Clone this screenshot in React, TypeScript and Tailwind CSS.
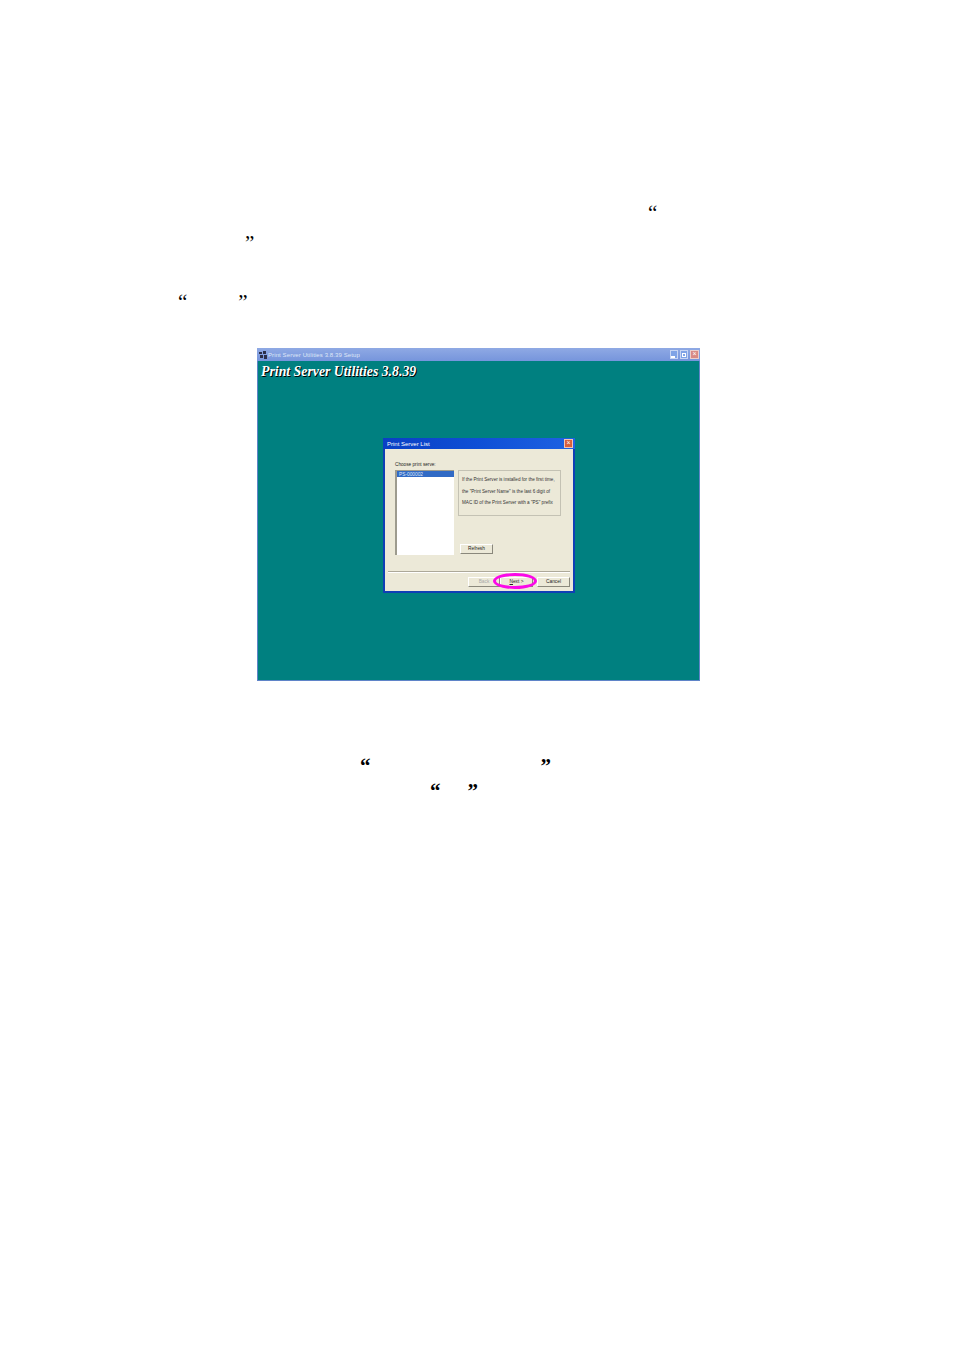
import type { ReactNode } from "react";

const sans = "font-['Liberation_Sans',Arial,sans-serif]";

function Quote({ children, className = "" }: { children: string; className?: string }) {
  return <span className={`font-['Liberation_Serif',serif] text-[21px] leading-[24px] text-black ${className}`}>{children}</span>;
}

function WinButton({ children, className = "" }: { children: ReactNode; className?: string }) {
  return (
    <button className={`h-[10px] flex items-center justify-center bg-[#ece9d8] border-t border-l border-t-white border-l-white border-r border-b border-r-[#8a887c] border-b-[#8a887c] text-[4.8px] leading-none ${className}`}>
      {children}
    </button>
  );
}

function Dialog() {
  return (
    <div className="relative w-[192px] h-[155px] bg-[#ece9d8] border-2 border-t-0 border-[#0f3fb5] flex flex-col">
      <div className="h-[11px] -mx-[2px] bg-gradient-to-r from-[#0a3fc4] via-[#0f4fd6] to-[#1e62e2] flex items-center justify-between pl-[4px] pr-[2px] shrink-0">
        <span className="text-[6px] leading-none text-white">Print Server List</span>
        <span className="w-[9px] h-[9px] bg-[#d9603c] border border-[#f3c4b4] text-white text-[7px] leading-[6px] text-center">×</span>
      </div>
      <div className="flex-1 flex flex-col pt-[11px]">
        <div className="pl-[10px] h-[8px] text-[4.7px] leading-[10px] text-[#222]">Choose print serve:</div>
        <div className="flex pl-[10px] mt-[2px] gap-[4px] h-[85px]">
          <div className="w-[59px] h-[85px] bg-white border-l-2 border-t border-[#9d9b8e]">
            <div className="h-[6px] bg-[#316ac5] text-[4.8px] leading-[7px] text-[#dfe6f7] pl-[2px]">PS-000002</div>
          </div>
          <div className="w-[103px] flex flex-col">
            <div className="h-[46px] border border-[#c4c2b4] flex flex-col gap-[5.5px] pt-[6px] pl-[3px] text-[4.6px] leading-[6px] text-[#333] whitespace-nowrap">
              <div>If the Print Server is installed for the first time,</div>
              <div>the "Print Server Name" is the last 6 digit of</div>
              <div>MAC ID of the Print Server with a "PS" prefix</div>
            </div>
            <div className="mt-[28px] pl-[2px]">
              <WinButton className="w-[33px] text-[#222]">Refresh</WinButton>
            </div>
          </div>
        </div>
        <div className="mt-[16px] mx-[3px] h-[2px] border-t border-b border-t-[#aca899] border-b-white" />
        <div className="flex justify-end pr-[3px] mt-[4px]">
          <WinButton className="w-[32px] text-[#aaa]">Back</WinButton>
          <WinButton className="w-[33px] border-l-black text-[#222]"><u>N</u>ext &gt;</WinButton>
          <WinButton className="w-[33px] ml-[4px] text-[#222]">Cancel</WinButton>
        </div>
      </div>
      <div className="absolute left-[108px] top-[135px] w-[44px] h-[16px] rounded-[50%] border-[3px] border-[#fb08e8]" />
    </div>
  );
}

function SetupWindow() {
  return (
    <div className={`w-[443px] h-[333px] bg-[#008080] border-l border-r border-b border-[#5f84c8] flex flex-col ${sans}`}>
      <div className="h-[13px] -mx-px bg-gradient-to-b from-[#8fa9e4] to-[#7695dc] flex items-center justify-between pl-[2px] pr-[1px] shrink-0">
        <div className="flex items-center gap-[1px]">
          <svg width="8" height="8" viewBox="0 0 8 8">
            <path d="M0 1h3v2H0zM4 0h3v3H4zM1 4h3v3H1zM5 4h3v4H5z" fill="#2b2f4a" />
          </svg>
          <span className="text-[6px] leading-[8px] tracking-[0.1px] text-[#dfe6f7]">Print Server Utilities 3.8.39 Setup</span>
        </div>
        <div className="flex gap-[2px]">
          <span className="w-[8px] h-[9px] bg-[#7fa3e6] border border-[#c7d5f3] flex items-end justify-start"><span className="w-[4px] h-[2px] bg-white" /></span>
          <span className="w-[8px] h-[9px] bg-[#7fa3e6] border border-[#c7d5f3] flex items-center justify-center"><span className="w-[4px] h-[4px] border border-white" /></span>
          <span className="w-[9px] h-[9px] bg-[#d98a84] border border-[#eccdca] text-white text-[7px] leading-[6px] text-center">×</span>
        </div>
      </div>
      <div className="pl-[3px] pt-[1px] h-[20px] font-['Liberation_Serif',serif] italic font-bold text-[13.8px] leading-[19px] text-white [text-shadow:1px_1px_0_#000] shrink-0">
        Print Server Utilities 3.8.39
      </div>
      <div className="pl-[125px] pt-[57px]">
        <Dialog />
      </div>
    </div>
  );
}

export default function App() {
  return (
    <div className="w-[954px] h-[1351px] bg-white flex flex-col">
      <div className="h-[201px]" />
      <div className="h-[24px] pl-[648px]"><Quote>“</Quote></div>
      <div className="h-[6px]" />
      <div className="h-[24px] pl-[245px]"><Quote>”</Quote></div>
      <div className="h-[35px]" />
      <div className="h-[24px] pl-[178px] flex gap-[51px]"><Quote>“</Quote><Quote>”</Quote></div>
      <div className="h-[34px]" />
      <div className="pl-[257px]"><SetupWindow /></div>
      <div className="h-[73px]" />
      <div className="h-[24px] pl-[360px] flex gap-[170px]"><Quote className="font-bold">“</Quote><Quote className="font-bold">”</Quote></div>
      <div className="h-[1px]" />
      <div className="h-[24px] pl-[430px] flex gap-[27px]"><Quote className="font-bold">“</Quote><Quote className="font-bold">”</Quote></div>
    </div>
  );
}
